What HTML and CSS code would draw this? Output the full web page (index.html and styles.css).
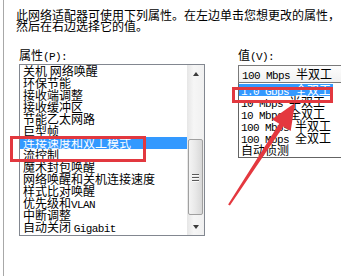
FILE: index.html
```html
<!DOCTYPE html>
<html lang="zh-CN">
<head>
<meta charset="utf-8">
<link rel="stylesheet" href="styles.css">
</head>
<body>
<div class="win">
  <p class="desc">此网络适配器可使用下列属性。在左边单击您想更改的属性，<br>然后在右边选择它的值。</p>
  <div class="cols">
    <div class="left">
      <div class="label">属性<span class="en">(P):</span></div>
      <div class="listbox">
        <ul class="items">
          <li>关机 网络唤醒</li>
          <li>环保节能</li>
          <li>接收端调整</li>
          <li>接收缓冲区</li>
          <li>节能乙太网路</li>
          <li>巨型帧</li>
          <li class="sel">连接速度和双工模式</li>
          <li>流控制</li>
          <li>魔术封包唤醒</li>
          <li>网络唤醒和关机连接速度</li>
          <li>样式比对唤醒</li>
          <li>优先级和<span class="en">VLAN</span></li>
          <li>中断调整</li>
          <li>自动关闭 <span class="en">Gigabit</span></li>
        </ul>
        <div class="scroll">
          <div class="btn"><i class="up"></i></div>
          <div class="track">
            <div class="thumb"><b></b><b></b><b></b></div>
          </div>
          <div class="btn"><i class="down"></i></div>
        </div>
      </div>
    </div>
    <div class="right">
      <div class="label">值<span class="en">(V):</span></div>
      <div class="combo"><span class="en">100 Mbps </span>半双工</div>
      <ul class="drop">
        <li class="sel"><span class="en">1.0 Gbps </span>全双工</li>
        <li><span class="en">10 Mbps </span>半双工</li>
        <li><span class="en">10 Mbps </span>全双工</li>
        <li><span class="en">100 Mbps </span>半双工</li>
        <li><span class="en">100 Mbps </span>全双工</li>
        <li>自动侦测</li>
      </ul>
    </div>
  </div>
  <div class="mark mark-left"></div>
  <div class="mark mark-right"></div>
  <svg class="arrow" width="341" height="276" viewBox="0 0 341 276">
    <polygon points="228.1,204.5 229.9,205.5 283.4,126.4 290.7,130.9 295,103 271.9,119.3 279.2,123.8" fill="#e4383f"/>
  </svg>
</div>
</body>
</html>
```
FILE: styles.css
```css
html, body {
  margin: 0;
  padding: 0;
  background: #fff;
  overflow: hidden;
}
body {
  width: 341px;
  height: 276px;
  font-family: "Noto Sans CJK SC", "Liberation Sans", sans-serif;
  font-size: 12px;
  color: #000;
}
.win {
  position: relative;
  height: 276px;
  margin-left: 3px;
  border-left: 1px solid #a8a8a8;
}
.en {
  font-family: "Liberation Mono", monospace;
  font-size: 11px;
  letter-spacing: -0.6px;
}
.desc {
  margin: 0;
  padding: 9px 0 0 12px;
  line-height: 11px;
  white-space: nowrap;
}
.cols {
  display: grid;
  grid-template-columns: 186px 1fr;
  column-gap: 33px;
  padding-left: 15px;
  margin-top: 18px;
}
.label {
  height: 12px;
  line-height: 12px;
}
.left .label { margin-bottom: 3px; }
.right .label { margin-bottom: 4px; }
.listbox {
  box-sizing: border-box;
  width: 186px;
  height: 172px;
  border: 1px solid #828790;
  display: flex;
}
.items {
  flex: 1;
  list-style: none;
  margin: 0;
  padding: 0;
  overflow: hidden;
}
.items li {
  height: 12px;
  line-height: 12px;
  padding-left: 3px;
  white-space: nowrap;
}
.items li.sel {
  background: #3399ff;
  color: #fff;
}
.scroll {
  width: 17px;
  display: flex;
  flex-direction: column;
  background: linear-gradient(to right, #e6e6e6, #f6f6f6 40%, #f0f0f0);
}
.btn {
  height: 17px;
  display: flex;
  align-items: center;
  justify-content: center;
}
.btn i {
  width: 0;
  height: 0;
  border-left: 3.5px solid transparent;
  border-right: 3.5px solid transparent;
}
.btn i.up { border-bottom: 4px solid #3c3c3c; }
.btn i.down { border-top: 4px solid #3c3c3c; }
.track {
  flex: 1;
  padding-top: 57px;
}
.thumb {
  box-sizing: border-box;
  height: 76px;
  margin: 0 1px;
  border: 1px solid #a0a0a0;
  border-radius: 2px;
  background: linear-gradient(to right, #f4f4f4, #e8e8e8 50%, #d8d8d8);
  display: flex;
  flex-direction: column;
  align-items: center;
  justify-content: center;
  gap: 2px;
}
.thumb b {
  display: block;
  width: 7px;
  height: 1px;
  background: #5a5a5a;
  box-shadow: 0 1px 0 #fafafa;
}
.combo {
  box-sizing: border-box;
  width: 130px;
  height: 18px;
  border: 1px solid #7a7a7a;
  padding-left: 3px;
  line-height: 16px;
  white-space: nowrap;
  background: linear-gradient(#fdfdfd, #f1f1f1);
}
.drop {
  box-sizing: border-box;
  width: 130px;
  margin: 0;
  padding: 1px 0 1px 0;
  list-style: none;
  border: 1px solid #646464;
  border-top: none;
}
.drop li {
  height: 12px;
  line-height: 12px;
  padding-left: 2px;
  white-space: nowrap;
}
.drop li.sel {
  width: fit-content;
  padding-right: 2px;
  background: #3399ff;
  color: #fff;
}
.mark {
  position: absolute;
  box-sizing: border-box;
  border: 3px solid #e2383f;
}
.mark-left {
  left: 6px;
  top: 136px;
  width: 136px;
  height: 26px;
}
.mark-right {
  left: 228px;
  top: 87px;
  width: 101px;
  height: 16px;
}
.arrow {
  position: absolute;
  left: -4px;
  top: 0;
}
```
